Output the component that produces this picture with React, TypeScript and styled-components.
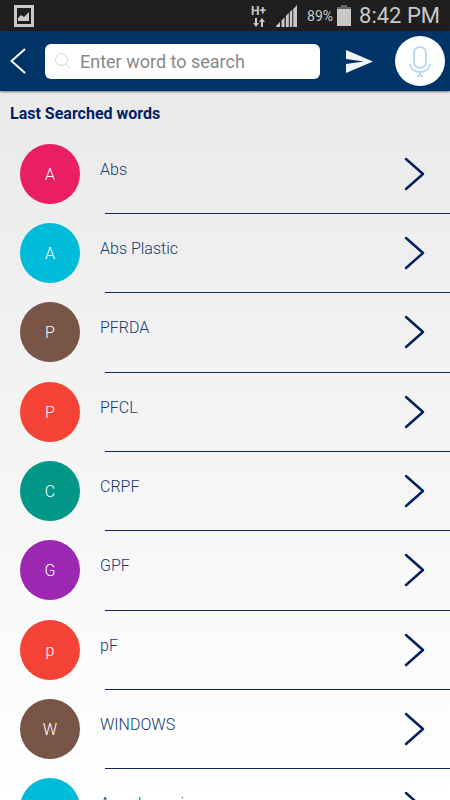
import React from 'react';
import styled, { createGlobalStyle } from 'styled-components';

const GlobalStyle = createGlobalStyle`
  * { box-sizing: border-box; }
  body { margin: 0; font-family: Roboto, "Liberation Sans", sans-serif; }
`;

const Screen = styled.div`
  display: flex;
  flex-direction: column;
  height: 100vh;
  overflow: hidden;
  background: #fff;
`;

const StatusBar = styled.div`
  display: flex;
  flex: none;
  align-items: center;
  justify-content: space-between;
  height: 31px;
  padding: 0 10px 0 14px;
  background: #1f1f1f;
  color: #c8c8c8;
`;

const StatusGroup = styled.div`
  display: flex;
  align-items: center;
`;

const Network = styled.span`
  display: flex;
  flex-direction: column;
  align-items: center;
  gap: 1px;
  font-size: 12px;
  font-weight: 700;
  line-height: 12px;
`;

const Battery = styled.span`
  margin: 0 4px 0 10px;
  font-size: 14px;
`;

const Clock = styled.time`
  margin-left: 8px;
  font-size: 22px;
  line-height: 30px;
`;

const SignalIcon = styled.svg`
  margin-left: 10px;
`;

const Header = styled.header`
  display: flex;
  flex: none;
  align-items: center;
  height: 60px;
  padding-right: 5px;
  background: #003366;
  box-shadow: 0 1px 2px rgba(0, 0, 0, 0.5);
  z-index: 1;
`;

const IconButton = styled.button`
  display: flex;
  flex: none;
  align-items: center;
  justify-content: center;
  padding: 0;
  border: 0;
  background: none;
  cursor: pointer;
`;

const BackButton = styled(IconButton)`
  width: 45px;
  height: 60px;
  padding-right: 10px;
`;

const SendButton = styled(IconButton)`
  width: 75px;
  height: 60px;
  padding-left: 4px;
`;

const MicButton = styled(IconButton)`
  width: 50px;
  height: 50px;
  border-radius: 50%;
  background: #fff;
`;

const SearchField = styled.label`
  display: flex;
  flex: 1;
  align-items: center;
  gap: 9px;
  min-width: 0;
  height: 35px;
  padding: 0 10px;
  border-radius: 6px;
  background: #fff;
`;

const SearchInput = styled.input`
  flex: 1;
  min-width: 0;
  padding: 0;
  border: 0;
  outline: none;
  background: transparent;
  color: #333;
  font: 400 18px Roboto, "Liberation Sans", sans-serif;
  &::placeholder { color: #888; opacity: 1; }
`;

const Content = styled.main`
  flex: 1;
  min-height: 0;
  overflow: hidden;
  background: linear-gradient(#eaeaea, #fff);
`;

const Title = styled.h1`
  height: 44px;
  margin: 0;
  padding: 0 10px;
  color: #001f66;
  font-size: 16px;
  font-weight: 700;
  line-height: 45px;
`;

const WordList = styled.ul`
  display: grid;
  grid-auto-rows: 79px 79px 80px;
  margin: 0;
  padding: 0;
  list-style: none;
`;

const WordLink = styled.a`
  display: flex;
  height: 100%;
  padding: 9px 0 0 20px;
  color: #123a72;
  text-decoration: none;
`;

const Avatar = styled.span<{ $color: string }>`
  flex: none;
  width: 60px;
  height: 60px;
  border-radius: 50%;
  background: ${({ $color }) => $color};
  color: #fff;
  font-size: 16px;
  font-weight: 300;
  line-height: 61px;
  text-align: center;
`;

const RowBody = styled.span`
  display: flex;
  flex: 1;
  justify-content: space-between;
  margin-left: 20px;
  padding-right: 25px;
  background: linear-gradient(#14265a, #14265a) 5px 100% / 100% 1px no-repeat;
`;

const Word = styled.span`
  padding-top: 16px;
  font-size: 16px;
  font-weight: 300;
  line-height: 20px;
`;

const Chevron = styled.svg`
  margin-top: 13px;
`;

const words = [
  { text: 'Abs', color: '#e91e63' },
  { text: 'Abs Plastic', color: '#00bcd8' },
  { text: 'PFRDA', color: '#795548' },
  { text: 'PFCL', color: '#f44336' },
  { text: 'CRPF', color: '#009688' },
  { text: 'GPF', color: '#9c27b0' },
  { text: 'pF', color: '#f44336' },
  { text: 'WINDOWS', color: '#795548' },
  { text: 'Aerodynamics', color: '#00bcd8' },
];

export default function App() {
  return (
    <Screen>
      <GlobalStyle />
      <StatusBar>
        <svg width="20" height="22" viewBox="0 0 20 22" aria-hidden="true">
          <path fill="#c8c8c8" fillRule="evenodd" d="M0 0h20v22H0zM3 3v16h14V3z" />
          <path fill="#c8c8c8" d="M4 16v-3l3-3 3 2 5-5v9z" />
        </svg>
        <StatusGroup>
          <Network>
            H+
            <svg width="12" height="9" viewBox="0 0 12 9" fill="#c8c8c8" aria-hidden="true">
              <path d="M2 0h2v5h2L3 9 0 5h2zM8 9h2V4h2L9 0 6 4h2z" />
            </svg>
          </Network>
          <SignalIcon width="21" height="22" viewBox="0 0 21 22" fill="#c8c8c8" aria-hidden="true">
            <path d="M0 22v-1l4-4v5zM5.500 22v-6.500l3-3V22zM9.800 22V11l3-3v14zM13.800 22V7l2.500-2.500V22zM17.300 22V4L21 0v22z" />
          </SignalIcon>
          <Battery>89%</Battery>
          <svg width="14" height="21" viewBox="0 0 14 21" aria-hidden="true">
            <path fill="#666" d="M4 0h6v2h4v2H0V2h4z" />
            <path fill="#c8c8c8" d="M0 4h14v17H0z" />
          </svg>
          <Clock>8:42 PM</Clock>
        </StatusGroup>
      </StatusBar>
      <Header>
        <BackButton type="button" aria-label="Back">
          <svg width="16" height="26" viewBox="0 0 16 26" fill="none" stroke="#fff" strokeWidth="2" strokeLinecap="round" strokeLinejoin="round">
            <path d="M14.500 1.500 1.500 13l13 11.500" />
          </svg>
        </BackButton>
        <SearchField>
          <svg width="16" height="16" viewBox="0 0 16 16" fill="none" stroke="#bcdaf5" aria-hidden="true">
            <circle cx="6.500" cy="6.500" r="6" />
            <path d="m11 11 4.500 4.500" />
          </svg>
          <SearchInput type="text" placeholder="Enter word to search" aria-label="Enter word to search" />
        </SearchField>
        <SendButton type="button" aria-label="Search">
          <svg width="28" height="24" viewBox="0 0 28 24" fill="#f0f3f8">
            <path d="M0 1 27 12.500 0 24v-9l18-2.500L0 10z" />
          </svg>
        </SendButton>
        <MicButton type="button" aria-label="Voice search">
          <svg width="22" height="32" viewBox="0 0 22 32" fill="none" stroke="#bfd9f2" strokeWidth="2">
            <rect x="5" y="2" width="12" height="21" rx="6" />
            <path d="M1 19c1 5 5 8 10 8s9-3 10-8M11 27v4M8 31h6" />
          </svg>
        </MicButton>
      </Header>
      <Content>
        <Title>Last Searched words</Title>
        <WordList>
          {words.map(({ text, color }) => (
            <li key={text}>
              <WordLink href="#">
                <Avatar $color={color}>{text[0]}</Avatar>
                <RowBody>
                  <Word>{text}</Word>
                  <Chevron width="22" height="34" viewBox="0 0 22 34" fill="none" stroke="#00205f" strokeWidth="2.500" strokeLinecap="round" strokeLinejoin="round" aria-hidden="true">
                    <path d="M3 2 20 17 3 32" />
                  </Chevron>
                </RowBody>
              </WordLink>
            </li>
          ))}
        </WordList>
      </Content>
    </Screen>
  );
}
